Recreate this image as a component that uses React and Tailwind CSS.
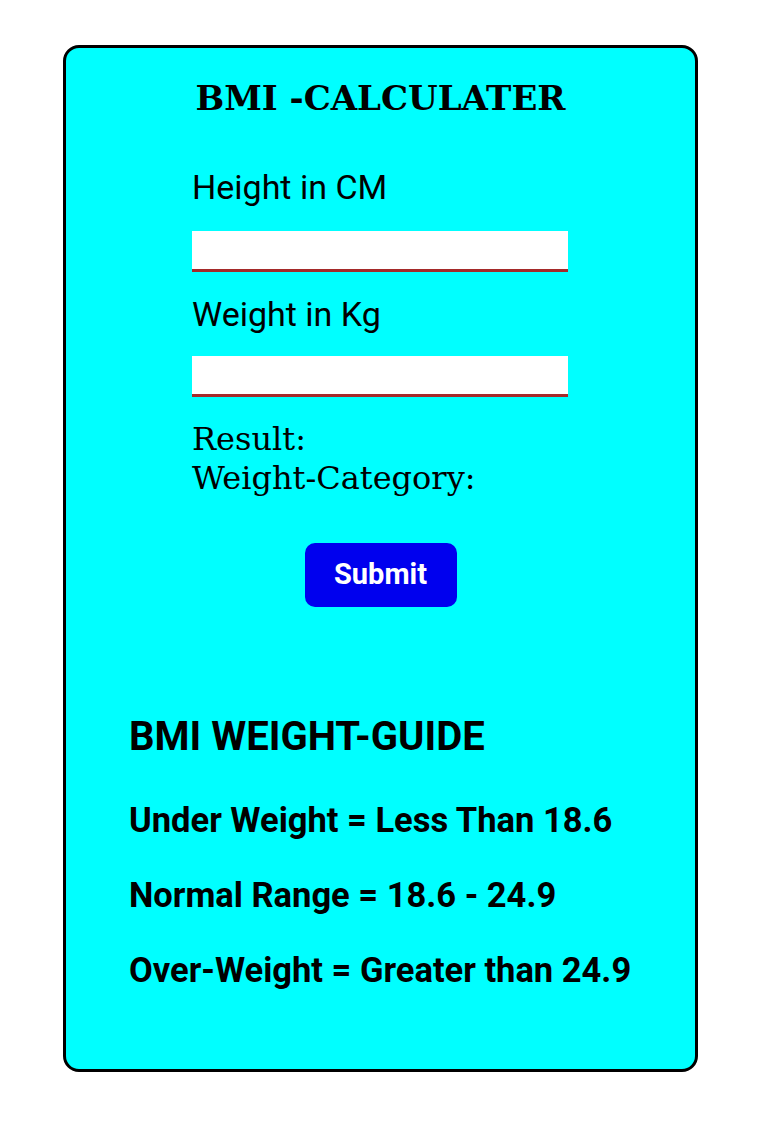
export default function App() {
  return (
    <div className="min-h-[1130px] w-[770px] bg-white pt-[45px] pl-[63px]" style={{ fontFamily: "Roboto, sans-serif" }}>
      <div className="w-[635px] h-[1027px] rounded-[16px] border-[3px] border-black bg-[#00ffff]">
        <h1 className="mt-[28px] text-center text-[34px] leading-[44px] font-bold text-black" style={{ fontFamily: '"DejaVu Serif", serif' }}>
          BMI -CALCULATER
        </h1>
        <div className="ml-[126px] mt-[45px] w-[376px]">
          <div className="text-[34px] leading-[44px] text-black">Height in CM</div>
          <div className="mt-[22px] h-[41px] bg-white border-b-[3px] border-[#a52a2a]"></div>
          <div className="mt-[20px] text-[34px] leading-[44px] text-black">Weight in Kg</div>
          <div className="mt-[20px] h-[41px] bg-white border-b-[3px] border-[#a52a2a]"></div>
          <div className="mt-[23px] text-[32px] leading-[39px] text-black" style={{ fontFamily: '"DejaVu Serif", serif' }}>
            <div>Result:</div>
            <div>Weight-Category:</div>
          </div>
        </div>
        <div className="mt-[45px] flex justify-center">
          <button className="w-[152px] h-[64px] rounded-[10px] bg-[#0000ee] text-white text-[29px] font-bold">Submit</button>
        </div>
        <div className="ml-[63px] mt-[108px] text-black font-bold">
          <div className="text-[40px] leading-[44px]">BMI WEIGHT-GUIDE</div>
          <div className="mt-[39px] text-[34.5px] leading-[44px]">Under Weight = Less Than 18.6</div>
          <div className="mt-[31px] text-[34.5px] leading-[44px]">Normal Range = 18.6 - 24.9</div>
          <div className="mt-[31px] text-[34.5px] leading-[44px]">Over-Weight = Greater than 24.9</div>
        </div>
      </div>
    </div>
  );
}
